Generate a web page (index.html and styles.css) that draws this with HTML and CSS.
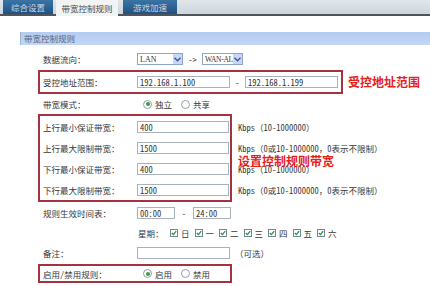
FILE: index.html
```html
<!DOCTYPE html>
<html lang="zh-CN">
<head>
    <meta charset="UTF-8">
    <title>带宽控制规则</title>
    <link rel="stylesheet" href="styles.css">
</head>
<body>

    <!-- Pestañas superiores -->
    <div class="tabs">
        <span class="tab tab-1">综合设置</span>
        <span class="tab tab-2 active">带宽控制规则</span>
        <span class="tab tab-3">游戏加速</span>
    </div>

    <div class="panel-title">带宽控制规则</div>

    <div class="form">
        <div class="row">
            <span class="label">数据流向：</span>
            <span class="select sel-lan"><span class="sel-text">LAN</span><i class="drop"><svg width="7" height="5" viewBox="0 0 7 5"><polyline points="0.5,0.8 3.5,3.8 6.5,0.8" fill="none" stroke="#3d5a8a" stroke-width="1.4"/></svg></i></span>
            <span class="arrow-text">-&gt;</span>
            <span class="select sel-wan"><span class="sel-text">WAN-AL</span><i class="drop"><svg width="7" height="5" viewBox="0 0 7 5"><polyline points="0.5,0.8 3.5,3.8 6.5,0.8" fill="none" stroke="#3d5a8a" stroke-width="1.4"/></svg></i></span>
        </div>

        <!-- Rango de direcciones -->
        <div class="mark-line">
            <div class="box">
                <div class="row">
                    <span class="label">受控地址范围：</span>
                    <input class="input w-ip" type="text" value="192.168.1.100">
                    <span class="dash">-</span>
                    <input class="input w-ip" type="text" value="192.168.1.199">
                </div>
            </div>
            <span class="note">受控地址范围</span>
        </div>

        <div class="row">
            <span class="label">带宽模式：</span>
            <span class="radio on"></span><span class="opt">独立</span>
            <span class="radio"></span><span class="opt">共享</span>
        </div>

        <!-- Ancho de banda -->
        <div class="bw">
            <div class="box box-bw">
                <div class="row bw-row">
                    <span class="label">上行最小保证带宽：</span>
                    <input class="input w-bw" type="text" value="400">
                </div>
                <div class="row bw-row">
                    <span class="label">上行最大限制带宽：</span>
                    <input class="input w-bw" type="text" value="1500">
                </div>
                <div class="row bw-row">
                    <span class="label">下行最小保证带宽：</span>
                    <input class="input w-bw" type="text" value="400">
                </div>
                <div class="row bw-row">
                    <span class="label">下行最大限制带宽：</span>
                    <input class="input w-bw" type="text" value="1500">
                </div>
            </div>
            <div class="hints">
                <div class="hint">Kbps（10-1000000）</div>
                <div class="hint">Kbps（0或10-1000000，0表示不限制）</div>
                <div class="hint">Kbps（10-1000000）</div>
                <div class="hint">Kbps（0或10-1000000，0表示不限制）</div>
                <span class="note note-bw">设置控制规则带宽</span>
            </div>
        </div>

        <div class="row row-time">
            <span class="label">规则生效时间表：</span>
            <input class="input w-time" type="text" value="00:00">
            <span class="dash dash-time">-</span>
            <input class="input w-time" type="text" value="24:00">
        </div>

        <div class="row row-week">
            <span class="label"></span>
            <span class="week-label">星期：</span>
            <span class="day"><i class="cb"><svg width="6" height="6" viewBox="0 0 6 6"><polyline points="0.8,3 2.4,4.6 5.2,1.2" fill="none" stroke="#2f8f2f" stroke-width="1.3"/></svg></i>日</span>
            <span class="day"><i class="cb"><svg width="6" height="6" viewBox="0 0 6 6"><polyline points="0.8,3 2.4,4.6 5.2,1.2" fill="none" stroke="#2f8f2f" stroke-width="1.3"/></svg></i>一</span>
            <span class="day"><i class="cb"><svg width="6" height="6" viewBox="0 0 6 6"><polyline points="0.8,3 2.4,4.6 5.2,1.2" fill="none" stroke="#2f8f2f" stroke-width="1.3"/></svg></i>二</span>
            <span class="day"><i class="cb"><svg width="6" height="6" viewBox="0 0 6 6"><polyline points="0.8,3 2.4,4.6 5.2,1.2" fill="none" stroke="#2f8f2f" stroke-width="1.3"/></svg></i>三</span>
            <span class="day"><i class="cb"><svg width="6" height="6" viewBox="0 0 6 6"><polyline points="0.8,3 2.4,4.6 5.2,1.2" fill="none" stroke="#2f8f2f" stroke-width="1.3"/></svg></i>四</span>
            <span class="day"><i class="cb"><svg width="6" height="6" viewBox="0 0 6 6"><polyline points="0.8,3 2.4,4.6 5.2,1.2" fill="none" stroke="#2f8f2f" stroke-width="1.3"/></svg></i>五</span>
            <span class="day"><i class="cb"><svg width="6" height="6" viewBox="0 0 6 6"><polyline points="0.8,3 2.4,4.6 5.2,1.2" fill="none" stroke="#2f8f2f" stroke-width="1.3"/></svg></i>六</span>
        </div>

        <div class="row row-note">
            <span class="label">备注：</span>
            <input class="input w-ip" type="text" value="">
            <span class="optional">（可选）</span>
        </div>

        <!-- Activar / desactivar -->
        <div class="box box-state">
            <div class="row row-state">
                <span class="label">启用/禁用规则：</span>
                <span class="radio on"></span><span class="opt">启用</span>
                <span class="radio"></span><span class="opt">禁用</span>
            </div>
        </div>
    </div>

</body>
</html>
```

FILE: styles.css
```css
body {
    margin: 0;
    width: 430px;
    height: 286px;
    overflow: hidden;
    background: #fff;
    font-family: "Noto Sans Mono CJK SC", "Noto Sans CJK SC", sans-serif;
    font-size: 8.5px;
    color: #383838;
}

/* Pestañas */
.tabs {
    display: flex;
    height: 14px;
    padding-left: 3px;
    background: linear-gradient(#e1e6eb, #ccd5dd);
    border-bottom: 2px solid #4f555b;
}

.tab {
    display: flex;
    align-items: center;
    justify-content: center;
    background: linear-gradient(#3a75a5, #1f5282);
    color: #c6d6e6;
}

.tab-1 { width: 50px; }
.tab-2 { width: 62px; margin-left: 3px; }
.tab-3 { width: 54px; margin-left: 5px; }

.tab.active {
    height: 16px;
    margin-bottom: -2px;
    background: #f2f4f4;
    color: #4a4a4a;
}

.panel-title {
    margin: 16px 0 0 20px;
    height: 13px;
    line-height: 13px;
    padding-left: 3px;
    background: linear-gradient(#b4ccf0, #c3d7f5);
    border-left: 1px solid #9fb5d6;
    color: #56657a;
}

/* Formulario */
.form {
    margin-left: 38px;
    padding-top: 4px;
}

.row {
    display: flex;
    align-items: center;
    height: 20px;
    padding-left: 5px;
}

.label {
    width: 94px;
    flex: none;
}

.box {
    border: 2px solid #a3343f;
    padding-right: 3px;
}

.box .row {
    padding-left: 3px;
}

.mark-line {
    display: flex;
    align-items: center;
    margin-top: 1px;
}

.note {
    margin-left: 5px;
    color: #e3211d;
    font-size: 12px;
    font-weight: bold;
    line-height: 14px;
}

.input {
    box-sizing: border-box;
    height: 12px;
    margin: 0;
    padding: 0 2px;
    border: 1px solid #a8b2bc;
    background: #fff;
    font: inherit;
    color: #333;
}

.w-ip { width: 93px; }
.w-bw { width: 92px; }
.w-time { width: 38px; }

.dash {
    width: 15px;
    text-align: center;
}

.dash-time {
    width: 18px;
}

.select {
    display: flex;
    align-items: center;
    box-sizing: border-box;
    height: 12px;
    padding-left: 2px;
    border: 1px solid #8ea6c2;
    font-family: "Liberation Serif", serif;
    font-size: 8px;
    white-space: nowrap;
}

.sel-text {
    overflow: hidden;
}

.sel-wan .sel-text {
    font-size: 7.5px;
    letter-spacing: -0.3px;
}

.sel-lan { width: 46px; }
.sel-wan { width: 41px; }

.drop {
    display: flex;
    flex: none;
    align-items: center;
    justify-content: center;
    width: 9px;
    height: 10px;
    margin-left: auto;
    background: #c6d7fb;
}

.arrow-text {
    width: 19px;
    text-align: center;
}

.radio {
    display: flex;
    align-items: center;
    justify-content: center;
    box-sizing: border-box;
    width: 9px;
    height: 9px;
    margin-left: 6px;
    border: 1px solid #929ea9;
    border-radius: 50%;
    background: #fff;
}

.radio + .opt + .radio {
    margin-left: 9px;
}

.radio.on::after {
    content: "";
    width: 4px;
    height: 4px;
    border-radius: 50%;
    background: #3c9c3c;
}

.opt {
    margin-left: 3px;
}

/* Bloque de ancho de banda */
.bw {
    display: flex;
    align-items: flex-start;
}

.box-bw {
    padding-right: 1px;
}

.bw-row {
    height: 21px;
}

.hints {
    position: relative;
    margin-left: 6px;
    padding-top: 3px;
}

.hint {
    display: flex;
    align-items: center;
    height: 21px;
    line-height: 9px;
    white-space: nowrap;
}

/* la nota roja se monta sobre las líneas Kbps, como en la captura */
.note-bw {
    position: absolute;
    top: 42px;
    left: 0;
    margin-left: 0;
    line-height: 10px;
    white-space: nowrap;
}

.row-time { height: 22px; }
.row-week { height: 18px; }
.row-note { height: 21px; }

.week-label {
    width: 32px;
    margin-left: 1px;
}

.day {
    display: flex;
    align-items: center;
    width: 24.5px;
}

.cb {
    display: flex;
    align-items: center;
    justify-content: center;
    box-sizing: border-box;
    width: 8px;
    height: 8px;
    margin-right: 3px;
    border: 1px solid #6f8695;
    background: #fff;
}

.optional {
    margin-left: 5px;
}

.box-state {
    display: inline-block;
    margin-top: 1px;
    padding-right: 0;
    width: 190px;
}

.row-state {
    height: 15px;
}
```
